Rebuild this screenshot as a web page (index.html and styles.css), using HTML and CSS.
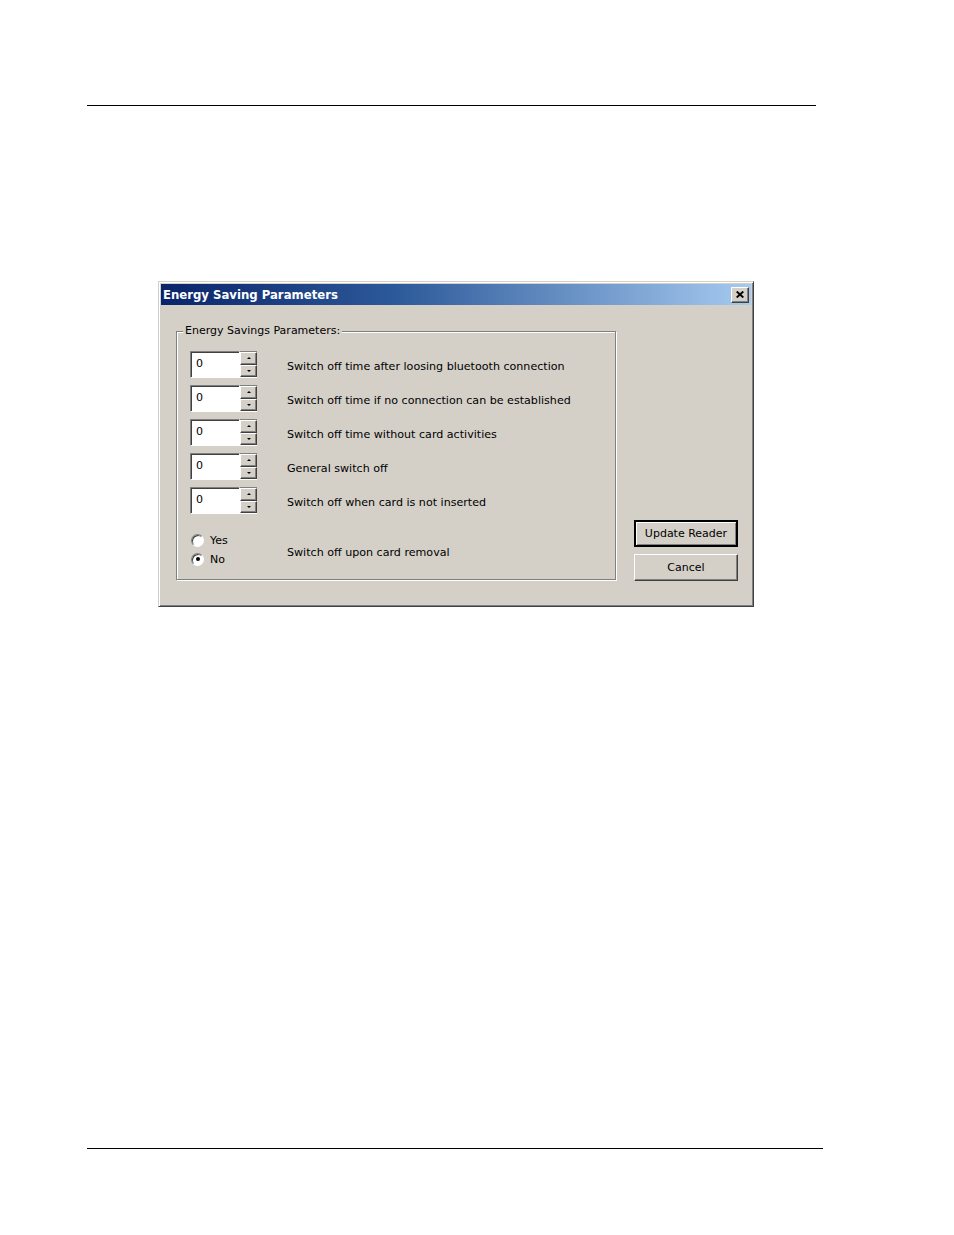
FILE: index.html
```html
<!DOCTYPE html>
<html lang="en">
<head>
<meta charset="utf-8">
<title>Energy Saving Parameters</title>
<link rel="stylesheet" href="styles.css">
</head>
<body>
<div class="rule-top"></div>

<div class="dialog">
  <div class="titlebar">
    <span class="title">Energy Saving Parameters</span>
    <span class="close-btn">
      <svg width="8" height="7" viewBox="0 0 8 7"><path d="M0.7 0.5 L7.3 6.5 M7.3 0.5 L0.7 6.5" stroke="#000" stroke-width="1.9" fill="none"/></svg>
    </span>
  </div>
  <div class="dialog-body">
    <fieldset class="group">
      <legend class="group-legend">Energy Savings Parameters:</legend>
      <div class="rows">
        <div class="row">
          <div class="spin"><div class="edit">0</div><div class="spin-btns"><span class="sb"><i class="up"></i></span><span class="sb"><i class="down"></i></span></div></div>
          <span class="label">Switch off time after loosing bluetooth connection</span>
        </div>
        <div class="row">
          <div class="spin"><div class="edit">0</div><div class="spin-btns"><span class="sb"><i class="up"></i></span><span class="sb"><i class="down"></i></span></div></div>
          <span class="label">Switch off time if no connection can be established</span>
        </div>
        <div class="row">
          <div class="spin"><div class="edit">0</div><div class="spin-btns"><span class="sb"><i class="up"></i></span><span class="sb"><i class="down"></i></span></div></div>
          <span class="label">Switch off time without card activities</span>
        </div>
        <div class="row">
          <div class="spin"><div class="edit">0</div><div class="spin-btns"><span class="sb"><i class="up"></i></span><span class="sb"><i class="down"></i></span></div></div>
          <span class="label">General switch off</span>
        </div>
        <div class="row">
          <div class="spin"><div class="edit">0</div><div class="spin-btns"><span class="sb"><i class="up"></i></span><span class="sb"><i class="down"></i></span></div></div>
          <span class="label">Switch off when card is not inserted</span>
        </div>
      </div>
      <div class="radio-row">
        <div class="radios">
          <div class="radio-item"><span class="radio"></span><span>Yes</span></div>
          <div class="radio-item"><span class="radio checked"></span><span>No</span></div>
        </div>
        <span class="label">Switch off upon card removal</span>
      </div>
    </fieldset>
    <div class="buttons">
      <div class="btn btn-default">Update Reader</div>
      <div class="btn">Cancel</div>
    </div>
  </div>
</div>

<div class="rule-bottom"></div>
</body>
</html>
```

FILE: styles.css
```css
html, body {
  margin: 0;
  padding: 0;
  background: #fff;
}

body {
  font-family: "DejaVu Sans", Verdana, sans-serif;
  font-size: 11px;
  color: #000;
}

.rule-top {
  margin-left: 87px;
  width: 729px;
  height: 106px;
  box-sizing: border-box;
  border-bottom: 1px solid #000;
}

.rule-bottom {
  margin-left: 87px;
  margin-top: 541px;
  width: 736px;
  border-top: 1px solid #000;
}

.dialog {
  margin-top: 175px;
  margin-left: 158px;
  width: 596px;
  height: 326px;
  box-sizing: border-box;
  background: #d4d0c8;
  border: 1px solid;
  border-color: #d4d0c8 #404040 #404040 #d4d0c8;
  box-shadow: inset 1px 1px 0 #fff, inset -1px -1px 0 #808080;
  padding: 2px;
}

.titlebar {
  height: 21px;
  display: flex;
  align-items: center;
  justify-content: space-between;
  padding: 0 2px 0 2px;
  background: linear-gradient(to right, #0a246a 0%, #2d5a9a 40%, #a6caf0 100%);
}

.title {
  color: #fff;
  font-weight: bold;
  font-size: 11.7px;
  white-space: nowrap;
}

.close-btn {
  width: 18px;
  height: 16px;
  box-sizing: border-box;
  background: #d4d0c8;
  border: 1px solid;
  border-color: #fff #404040 #404040 #fff;
  box-shadow: inset -1px -1px 0 #808080;
  display: flex;
  align-items: center;
  justify-content: center;
}

.dialog-body {
  display: flex;
  gap: 18px;
  padding: 19px 13px 0 15px;
}

.group {
  margin: 0;
  padding: 13px 0 0 0;
  width: 440px;
  height: 256px;
  box-sizing: border-box;
  min-width: 0;
  border: 1px solid #808080;
  box-shadow: inset 1px 1px 0 #fff, 1px 1px 0 #fff;
}

.group-legend {
  margin-left: 6px;
  padding: 0 2px;
  line-height: 14px;
  background: #d4d0c8;
  white-space: nowrap;
}

.rows {
  display: flex;
  flex-direction: column;
  gap: 7px;
  padding-left: 13px;
}

.row {
  display: flex;
  align-items: center;
  height: 27px;
}

.spin {
  display: flex;
  width: 67px;
  height: 27px;
  flex-shrink: 0;
  margin-right: 30px;
}

.edit {
  width: 50px;
  height: 27px;
  box-sizing: border-box;
  background: #fff;
  border: 1px solid;
  border-color: #808080 #fff #fff #808080;
  box-shadow: inset 1px 1px 0 #404040;
  padding: 5px 0 0 5px;
  line-height: 13px;
}

.spin-btns {
  width: 17px;
  display: flex;
  flex-direction: column;
  border-top: 1px solid #808080;
  border-bottom: 1px solid #fff;
}

.sb {
  flex: 1;
  box-sizing: border-box;
  background: #d4d0c8;
  border: 1px solid;
  border-color: #fff #404040 #404040 #fff;
  box-shadow: inset -1px -1px 0 #808080;
  display: flex;
  align-items: center;
  justify-content: center;
}

.sb i {
  display: block;
  width: 0;
  height: 0;
  border-left: 2.5px solid transparent;
  border-right: 2.5px solid transparent;
}

.sb i.up {
  border-bottom: 2.5px solid #000;
}

.sb i.down {
  border-top: 2.5px solid #000;
}

.label {
  white-space: nowrap;
  font-size: 11.1px;
}

.row .label {
  margin-top: 3px;
}

.radio-row {
  display: flex;
  align-items: center;
  margin-top: 19px;
  padding-left: 13px;
}

.radios {
  width: 97px;
  display: flex;
  flex-direction: column;
  gap: 5px;
}

.radio-item {
  display: flex;
  align-items: center;
  gap: 6px;
  height: 14px;
  padding-left: 1px;
}

.radio {
  position: relative;
  width: 13px;
  height: 13px;
  box-sizing: border-box;
  border-radius: 50%;
  background: #fff;
  border: 1px solid;
  border-color: #808080 #fff #fff #808080;
  box-shadow: inset 1px 1px 0 #404040;
}

.radio.checked::after {
  content: "";
  position: absolute;
  left: 3.5px;
  top: 3.5px;
  width: 4px;
  height: 4px;
  border-radius: 50%;
  background: #000;
}

.radio-row .label {
  margin-top: 6px;
}

.buttons {
  width: 104px;
  display: flex;
  flex-direction: column;
  justify-content: flex-end;
  gap: 7px;
  height: 257px;
  box-sizing: border-box;
}

.btn {
  height: 27px;
  box-sizing: border-box;
  background: #d4d0c8;
  border: 1px solid;
  border-color: #fff #404040 #404040 #fff;
  box-shadow: inset -1px -1px 0 #808080;
  display: flex;
  align-items: center;
  justify-content: center;
  white-space: nowrap;
}

.btn-default {
  border: 2px solid;
  border-color: #000;
  box-shadow: inset 1px 1px 0 #fff, inset -1px -1px 0 #808080;
}
```
